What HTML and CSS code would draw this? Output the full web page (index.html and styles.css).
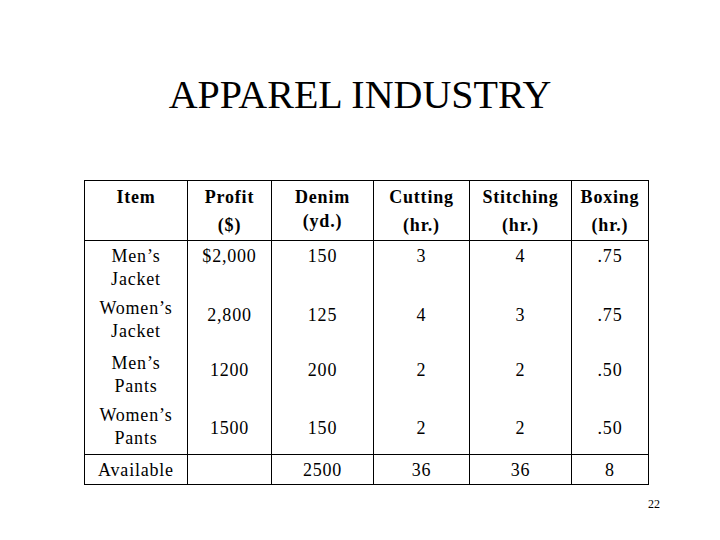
FILE: index.html
```html
<!DOCTYPE html>
<html>
<head>
<meta charset="utf-8">
<link rel="stylesheet" href="styles.css">
</head>
<body>
<div class="slide">
  <h1 class="title">APPAREL INDUSTRY</h1>
  <div class="table">
    <div class="cell head br">Item</div>
    <div class="cell head br">Profit<br>($)</div>
    <div class="cell head tight br">Denim<br>(yd.)</div>
    <div class="cell head br">Cutting<br>(hr.)</div>
    <div class="cell head br">Stitching<br>(hr.)</div>
    <div class="cell head br">Boxing<br>(hr.)</div>

    <div class="cell item r1">Men’s<br>Jacket</div>
    <div class="cell val r1">$2,000</div>
    <div class="cell val r1">150</div>
    <div class="cell val r1">3</div>
    <div class="cell val r1">4</div>
    <div class="cell val r1 last">.75</div>

    <div class="cell item r2">Women’s<br>Jacket</div>
    <div class="cell val r2">2,800</div>
    <div class="cell val r2">125</div>
    <div class="cell val r2">4</div>
    <div class="cell val r2">3</div>
    <div class="cell val r2 last">.75</div>

    <div class="cell item r3">Men’s<br>Pants</div>
    <div class="cell val r3">1200</div>
    <div class="cell val r3">200</div>
    <div class="cell val r3">2</div>
    <div class="cell val r3">2</div>
    <div class="cell val r3 last">.50</div>

    <div class="cell item r4 br">Women’s<br>Pants</div>
    <div class="cell val r4 br">1500</div>
    <div class="cell val r4 br">150</div>
    <div class="cell val r4 br">2</div>
    <div class="cell val r4 br">2</div>
    <div class="cell val r4 br last">.50</div>

    <div class="cell foot br">Available</div>
    <div class="cell foot br"></div>
    <div class="cell foot br">2500</div>
    <div class="cell foot br">36</div>
    <div class="cell foot br">36</div>
    <div class="cell foot br">8</div>
  </div>
  <div class="pagenum">22</div>
</div>
</body>
</html>
```

FILE: styles.css
```css
html, body {
  margin: 0;
  padding: 0;
  background: #ffffff;
}

.slide {
  width: 720px;
  height: 540px;
  position: relative;
  background: #ffffff;
  color: #000000;
  font-family: "Liberation Serif", "Times New Roman", serif;
  padding-top: 71px;
  box-sizing: border-box;
}

.title {
  margin: 0;
  height: 48px;
  font-size: 40px;
  line-height: 48px;
  font-weight: normal;
  text-align: center;
}

.table {
  margin-top: 61px;
  margin-left: 84px;
  width: 565px;
  box-sizing: border-box;
  border-left: 1px solid #000;
  border-top: 1px solid #000;
  display: grid;
  grid-template-columns: 103px 84px 102px 96px 102px 77px;
  grid-template-rows: 60px 53px 55px 52px 54px 30px;
}

.cell {
  box-sizing: border-box;
  border-right: 1px solid #000;
  text-align: center;
  font-size: 18px;
  letter-spacing: 0.8px;
  line-height: 23px;
}

.br {
  border-bottom: 1px solid #000;
}

.head {
  font-weight: bold;
  line-height: 28px;
  padding-top: 2px;
}

.head.tight {
  line-height: 24px;
  padding-top: 4px;
}

.item.r1 { padding-top: 4px; }
.item.r2, .item.r3, .item.r4 { padding-top: 3px; }

.val.r1 { padding-top: 4px; }
.val.r2 { padding-top: 10px; }
.val.r3 { padding-top: 10px; }
.val.r4 { padding-top: 16px; }

.foot {
  padding-top: 4px;
}

.pagenum {
  position: absolute;
  left: 640px;
  top: 497px;
  width: 20px;
  text-align: right;
  font-size: 12px;
  line-height: 14px;
}
```
